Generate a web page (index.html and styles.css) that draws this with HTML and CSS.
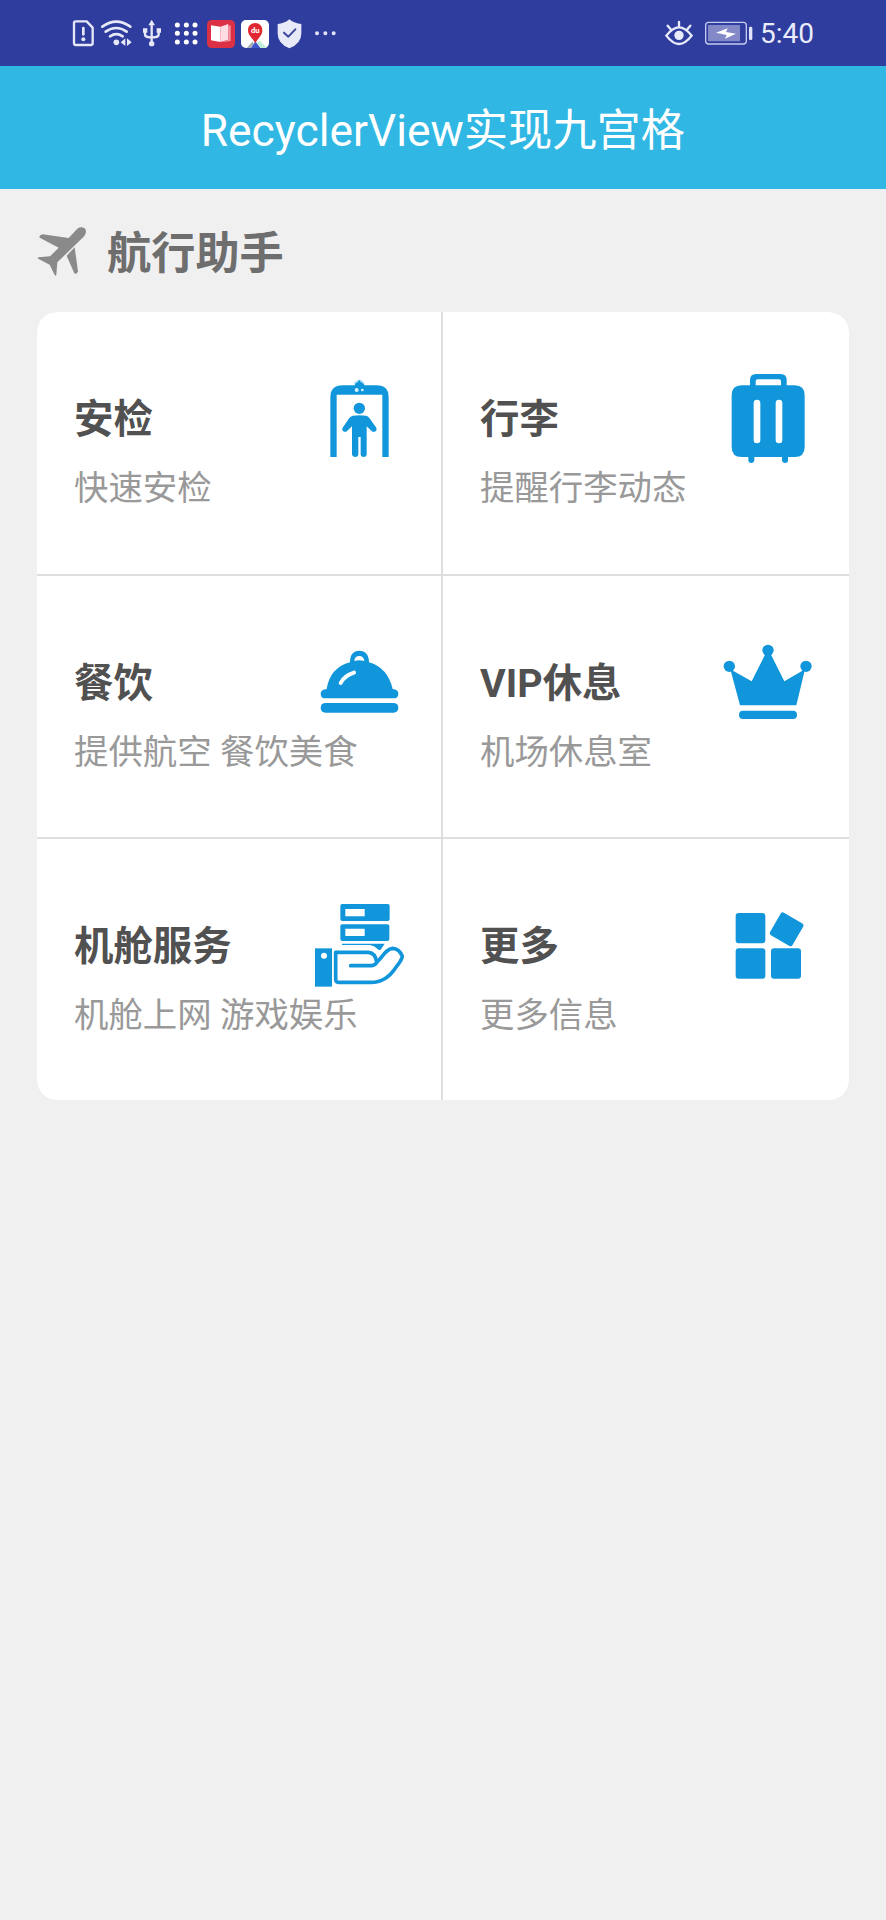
FILE: index.html
```html
<!DOCTYPE html>
<html lang="zh-CN">
<head>
<meta charset="utf-8">
<title>RecyclerView实现九宫格</title>
<link rel="stylesheet" href="styles.css">
</head>
<body>
<div class="status">
  <div class="status-left">
    <svg width="28" height="66" viewBox="30 0 84 198" fill="none" stroke="#e6e8f8" stroke-width="7" stroke-linejoin="round" stroke-linecap="round"><path d="M47 64H80L98 83V130Q98 135 93 135H47Q42 135 42 130V69Q42 64 47 64Z"/><path d="M70 84V103" stroke-width="8"/><circle cx="70" cy="118" r="6" fill="#e6e8f8" stroke="none"/></svg>
    <svg width="39" height="66" viewBox="114 0 117 198" fill="none" stroke="#e6e8f8" stroke-width="8" stroke-linecap="round"><path d="M127 80Q169 50 211 80M137 95Q169 73 200 95M150 109Q169 96 188 109"/><circle cx="169" cy="127" r="8.500" fill="#e6e8f8" stroke="none"/><path d="M196 115V138L182 127ZM201 115V138L215 127Z" fill="#e6e8f8" stroke="none"/></svg>
    <svg width="31" height="66" viewBox="231 0 93 198" fill="none" stroke="#e6e8f8" stroke-width="7"><path d="M275 72V130M255 94V103Q255 110 263 111L275 113L288 111Q296 110 296 103V94"/><path d="M275 59L285 76H265ZM249 85H262V98H249ZM290 85H303V98H290Z" fill="#e6e8f8" stroke="none"/><circle cx="275" cy="131" r="8" fill="#e6e8f8" stroke="none"/></svg>
    <svg width="35" height="66" viewBox="324 0 105 198" fill="none" stroke="#fff" stroke-width="15" stroke-linecap="round"><path d="M352 75h.1M379 75h.1M405 75h.1M352 100h.1M379 100h.1M405 100h.1M352 126h.1M379 126h.1M405 126h.1"/></svg>
    <svg width="35" height="66" viewBox="429 0 105 198"><rect x="441" y="60" width="84" height="84" rx="14" fill="#dc3145"/><path d="M453 76L481 80V126L453 121Z" fill="#fff"/><path d="M481 80L505 72V119L481 126Z" fill="#ffdde2"/><path d="M505 78L512 76V123L481 127L505 119Z" fill="#f294a2"/></svg>
    <svg width="35" height="66" viewBox="534 0 105 198"><rect x="543" y="60" width="84" height="84" rx="15" fill="#fff"/><path d="M560 144L578 124L586 144Z" fill="#a8afb8"/><path d="M574 144L586 124L602 144Z" fill="#3f58cf"/><path d="M590 128L600 122L621 144H602Z" fill="#c3efd9"/><path d="M586 69C573 69 564 78 564 91C564 105 575 113 586 129C597 113 607 105 607 91C607 78 598 69 586 69Z" fill="#e02832"/><text x="586" y="99" class="pin-text">du</text></svg>
    <svg width="34" height="66" viewBox="639 0 102 198"><path d="M688 58Q704 71 724 72V101Q724 130 688 145Q653 130 653 101V72Q673 71 688 58Z" fill="#e8eaf8"/><path d="M672 98L685 110L706 88" fill="none" stroke="#3b489f" stroke-width="6" stroke-linecap="round" stroke-linejoin="round"/></svg>
    <svg width="33" height="66" viewBox="741 0 99 198" fill="none" stroke="#e2e5f8" stroke-width="12" stroke-linecap="round"><path d="M771 100h.1M796 100h.1M821 100h.1"/></svg>
  </div>
  <div class="status-right">
    <svg width="38" height="66" viewBox="60 0 114 198" fill="none" stroke="#e9ebfb" stroke-width="7" stroke-linecap="round"><path d="M79 107Q117 57 155 107Q117 157 79 107ZM117 80V66M92 88L83 77M142 88L151 77"/><circle cx="117" cy="106" r="14" fill="#e9ebfb" stroke="none"/></svg>
    <svg width="57" height="66" viewBox="174 0 171 198"><rect x="197" y="67" width="122" height="65" rx="9" fill="none" stroke="#c5caf0" stroke-width="4"/><rect x="204" y="75" width="96" height="49" rx="2" fill="#8389c7"/><path d="M263 85L258 96L288 101L255 116L260 105L228 98Z" fill="#fff"/><rect x="327" y="80" width="10" height="40" rx="4" fill="#dfe2f8"/></svg>
    <span class="clock">5:40</span>
  </div>
</div>
<header class="header">RecyclerView实现九宫格</header>
<main class="page">
  <div class="section">
    <svg width="50" height="50" viewBox="51 45 150 150" fill="#8a8a8a"><path d="M172 53Q182 46 193 51Q201 58 196 70Q193 76 187 81L112 154L109 192Q107 197 104 192L89 161L56 144Q50 140 57 139L90 136L116 110L62 82Q55 79 61 73L68 70L146 81Z"/><path d="M164 109L174 181Q170 192 163 187L140 134Z"/></svg>
    <h2 class="section-title">航行助手</h2>
  </div>
  <div class="grid">
    <div class="cell">
      <div class="cell-head"><h3 class="cell-title">安检</h3>
        <svg class="icon" viewBox="855 42 267 267"><path d="M901 291V112Q901 76 938 76H974Q977 61 988 61Q1000 61 1003 76H1040Q1076 76 1076 112V291H1057V104H920V291Z"/><circle cx="980" cy="90" r="6" fill="#d9f2fb"/><circle cx="997" cy="90" r="4" fill="#d9f2fb"/><path d="M972 69L984 63M991 62L1003 70" stroke="#bce3f6" stroke-width="5"/><circle cx="988" cy="145" r="17"/><path d="M969 167Q988 164 1008 167Q1014 168 1018 174L1038 202Q1043 211 1035 215Q1029 217 1024 212L1010 199V284Q1008 291 1001 291Q993 291 992 284V231H985V284Q984 291 976 291Q968 291 966 284V199L952 212Q946 218 940 214Q934 209 939 202L958 174Q963 168 969 167Z"/></svg></div>
      <p class="cell-sub">快速安检</p>
    </div>
    <div class="cell">
      <div class="cell-head"><h3 class="cell-title">行李</h3>
        <svg class="icon" viewBox="849 222 267 267"><path fill-rule="evenodd" d="M930 256V240Q930 222 948 222H1022Q1040 222 1040 240V256H1064Q1094 256 1094 286V441Q1094 471 1064 471H1044V482Q1043 489 1036 489Q1028 489 1026 482V471H943V482Q941 489 934 489Q926 489 925 482V471H905Q875 471 875 441V286Q875 256 905 256ZM947 256H1023V244Q1023 238 1017 238H953Q947 238 947 244Z"/><path d="M951 309V420M1017 309V420" stroke="#fff" stroke-width="20" stroke-linecap="round"/></svg></div>
      <p class="cell-sub">提醒行李动态</p>
    </div>
    <div class="cell">
      <div class="cell-head"><h3 class="cell-title">餐饮</h3>
        <svg class="icon" viewBox="855 54 267 267"><path d="M890 207Q900 143 960 127Q960 92 988 92Q1016 92 1017 127Q1073 143 1088 207Q1105 209 1105 221Q1105 235 1090 235H886Q872 235 872 221Q872 209 890 207Z"/><path d="M973 123Q974 108 988 108Q1001 108 1003 123Q988 119 973 123Z" fill="#fff"/><path d="M932 189Q942 168 972 158" fill="none" stroke="#fff" stroke-width="12" stroke-linecap="round"/><rect x="872" y="249" width="233" height="29" rx="14"/></svg></div>
      <p class="cell-sub">提供航空 餐饮美食</p>
    </div>
    <div class="cell">
      <div class="cell-head"><h3 class="cell-title">VIP休息</h3>
        <svg class="icon" viewBox="849 54 267 267"><circle cx="984" cy="91" r="17"/><circle cx="868" cy="139" r="17"/><circle cx="1098" cy="139" r="17"/><path d="M976 102H992L1033 184L1095 148L1069 256H900L871 148L935 184Z"/><rect x="897" y="272" width="174" height="25" rx="12"/></svg></div>
      <p class="cell-sub">机场休息室</p>
    </div>
    <div class="cell">
      <div class="cell-head"><h3 class="cell-title">机舱服务</h3>
        <svg class="icon" viewBox="855 63 267 267"><rect x="931" y="72" width="148" height="51" rx="6"/><rect x="931" y="133" width="147" height="50" rx="6"/><path d="M946 87H1004V109H946ZM946 146H1004V168H946Z" fill="#fff"/><path d="M936 191H1064L1052 209Q1046 212 1040 205Q1034 198 1020 195H936Z"/><path d="M855 205H906V320H855Z"/><circle cx="882" cy="227" r="9" fill="#fff"/><path d="M917 217H1015Q1037 219 1040 247C1056 234 1067 206 1088 205Q1108 206 1117 229Q1115 242 1097 263Q1068 307 1023 307H925Q917 307 917 297ZM962 257H1025Q1036 256 1041 246" fill="none" stroke="#1296db" stroke-width="11" stroke-linecap="round" stroke-linejoin="round"/></svg></div>
      <p class="cell-sub">机舱上网 游戏娱乐</p>
    </div>
    <div class="cell">
      <div class="cell-head"><h3 class="cell-title">更多</h3>
        <svg class="icon" viewBox="849 63 267 267"><rect x="887" y="99" width="89" height="91" rx="9"/><rect x="887" y="205" width="89" height="91" rx="9"/><rect x="993" y="205" width="90" height="91" rx="9"/><rect x="1001" y="109" width="78" height="78" rx="7" transform="rotate(30 1040 148)"/></svg></div>
      <p class="cell-sub">更多信息</p>
    </div>
  </div>
</main>
</body>
</html>
```
FILE: styles.css
```css
* { box-sizing: border-box; }
body {
  margin: 0;
  min-height: 1920px;
  background: #f0f0f0;
  font-family: Roboto, "Noto Sans CJK SC", sans-serif;
}
svg { display: block; flex: none; }
h2, h3, p { margin: 0; }
.status {
  display: flex;
  justify-content: space-between;
  height: 66px;
  padding: 0 72px 0 70px;
  background: #2f3d9e;
}
.status-left, .status-right { display: flex; }
.pin-text {
  font: 700 23px Roboto, sans-serif;
  fill: #fff;
  text-anchor: middle;
}
.clock {
  width: 59px;
  padding-left: 5px;
  color: #e9ebfb;
  font-size: 28px;
  line-height: 68px;
  white-space: nowrap;
}
.header {
  height: 123px;
  background: #31b7e3;
  color: #fff;
  font-size: 44.3px;
  line-height: 130px;
  text-align: center;
}
.page { padding: 0 37px; }
.section {
  display: flex;
  align-items: center;
  gap: 20px;
  height: 123px;
}
.section-title {
  padding-top: 6px;
  color: #6e6e6e;
  font-size: 44.2px;
  line-height: 60px;
}
.grid {
  display: grid;
  grid-template-columns: 404px 406px;
  grid-template-rows: 262px 261px 261px;
  gap: 2px;
  overflow: hidden;
  border-radius: 20px;
  background: #dedede;
}
.cell {
  padding: 62px 37px 0;
  background: #fff;
}
.cell-head {
  display: flex;
  align-items: center;
  justify-content: space-between;
  height: 89px;
}
.cell-title {
  padding-top: 3px;
  color: #515151;
  font-size: 39.4px;
  line-height: 50px;
  white-space: nowrap;
}
.icon {
  width: 89px;
  height: 89px;
  fill: #1296db;
}
.cell-sub {
  color: #999;
  font-size: 34.4px;
  line-height: 51px;
  white-space: nowrap;
}
```
